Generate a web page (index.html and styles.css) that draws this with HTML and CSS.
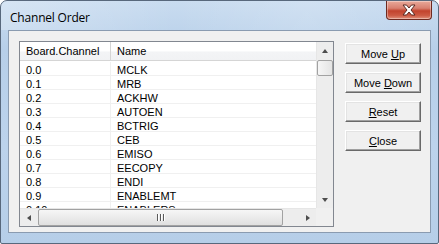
FILE: index.html
```html
<!DOCTYPE html>
<html>
<head>
<meta charset="utf-8">
<link rel="stylesheet" href="styles.css">
</head>
<body>
<div class="window">
  <div class="titlebar">
    <span class="title">Channel Order</span>
    <div class="close">
      <svg width="16" height="12" viewBox="0 0 16 12">
        <path d="M2 1 L5.5 1 L8 4 L10.5 1 L14 1 L10 6 L14 11 L10.5 11 L8 8 L5.5 11 L2 11 L6 6 Z" fill="#fff" stroke="#5a2a22" stroke-width="1" stroke-linejoin="round"/>
      </svg>
    </div>
  </div>
  <div class="client">
    <div class="listbox">
      <div class="listarea">
        <div class="header">
          <div class="hcol c1">Board.Channel</div>
          <div class="hcol c2">Name</div>
        </div>
        <div class="rows">
          <div class="row"><span class="cell c1">0.0</span><span class="cell c2">MCLK</span></div>
          <div class="row"><span class="cell c1">0.1</span><span class="cell c2">MRB</span></div>
          <div class="row"><span class="cell c1">0.2</span><span class="cell c2">ACKHW</span></div>
          <div class="row"><span class="cell c1">0.3</span><span class="cell c2">AUTOEN</span></div>
          <div class="row"><span class="cell c1">0.4</span><span class="cell c2">BCTRIG</span></div>
          <div class="row"><span class="cell c1">0.5</span><span class="cell c2">CEB</span></div>
          <div class="row"><span class="cell c1">0.6</span><span class="cell c2">EMISO</span></div>
          <div class="row"><span class="cell c1">0.7</span><span class="cell c2">EECOPY</span></div>
          <div class="row"><span class="cell c1">0.8</span><span class="cell c2">ENDI</span></div>
          <div class="row"><span class="cell c1">0.9</span><span class="cell c2">ENABLEMT</span></div>
          <div class="row"><span class="cell c1">0.10</span><span class="cell c2">ENABLERS</span></div>
          <div class="row"><span class="cell c1">0.11</span><span class="cell c2">ESD</span></div>
        </div>
      </div>
      <div class="vscroll">
        <div class="sbtn"><span class="arrow up"></span></div>
        <div class="vthumb"></div>
        <div class="vtrack"></div>
        <div class="sbtn"><span class="arrow down"></span></div>
      </div>
      <div class="hscroll">
        <div class="sbtn h"><span class="arrow left"></span></div>
        <div class="hthumb"><span class="grip"></span><span class="grip"></span><span class="grip"></span></div>
        <div class="htrack"></div>
        <div class="sbtn h"><span class="arrow right"></span></div>
      </div>
      <div class="corner"></div>
    </div>
    <div class="buttons">
      <div class="btn"><span>Move <u>U</u>p</span></div>
      <div class="btn"><span>Move <u>D</u>own</span></div>
      <div class="btn"><span><u>R</u>eset</span></div>
      <div class="btn"><span><u>C</u>lose</span></div>
    </div>
  </div>
</div>
</body>
</html>
```
FILE: styles.css
```css
html, body {
  margin: 0;
  padding: 0;
  background: #ffffff;
}
.window {
  width: 439px;
  height: 244px;
  box-sizing: border-box;
  border: 1px solid #58687c;
  border-radius: 7px 7px 2px 2px;
  background: linear-gradient(180deg, #c9dcf0 0%, #b7cfe9 20%, #bcd3ec 60%, #b6cee8 100%);
  display: flex;
  flex-direction: column;
  overflow: hidden;
}
.titlebar {
  height: 29px;
  display: flex;
  justify-content: space-between;
  align-items: flex-start;
  padding: 0 6px 0 9px;
  background: linear-gradient(90deg, rgba(255,255,255,0.25), rgba(255,255,255,0) 40%, rgba(255,255,255,0.15) 70%, rgba(255,255,255,0));
}
.title {
  font-family: "Open Sans", "Noto Sans", sans-serif;
  font-size: 12px;
  color: #000;
  margin-top: 8px;
  letter-spacing: -0.2px;
}
.close {
  width: 46px;
  height: 19px;
  box-sizing: border-box;
  border: 1px solid #6e2a20;
  border-top: none;
  border-radius: 0 0 4px 4px;
  background: linear-gradient(180deg, #e9a99a 0%, #d88070 40%, #c2432d 55%, #cc5a43 80%, #e0917c 100%);
  box-shadow: inset 0 0 0 1px rgba(255,255,255,0.35);
  display: flex;
  align-items: center;
  justify-content: center;
}
.client {
  margin: 0 7px;
  height: 203px;
  box-sizing: border-box;
  border: 1px solid #8a9bb0;
  background: #f0f0f0;
  display: flex;
  align-items: flex-start;
  padding: 10px 0 0 10px;
  gap: 11px;
}
.listbox {
  width: 315px;
  height: 186px;
  box-sizing: border-box;
  border: 1px solid #828790;
  background: #fff;
  display: grid;
  grid-template-columns: 296px 17px;
  grid-template-rows: 166px 18px;
  font-family: "Liberation Sans", Arial, sans-serif;
  font-size: 11px;
  color: #000;
}
.listarea {
  overflow: hidden;
}
.header {
  height: 19px;
  display: flex;
  background: linear-gradient(180deg, #ffffff 0%, #ffffff 50%, #f3f4f6 55%, #f1f2f4 100%);
  border-bottom: 1px solid #d5d5d5;
  box-sizing: border-box;
}
.hcol {
  box-sizing: border-box;
  line-height: 19px;
  padding-left: 6px;
  border-right: 1px solid #d5d5d5;
}
.hcol.c1 { width: 91px; }
.hcol.c2 { flex: 1; border-right: none; }
.rows {
  display: flex;
  flex-direction: column;
  padding-top: 1px;
}
.row {
  height: 13px;
  display: flex;
  border-bottom: 1px solid #f0f0f0;
}
.cell {
  line-height: 14px;
  padding-top: 1px;
  padding-left: 6px;
  box-sizing: border-box;
  white-space: nowrap;
}
.cell.c1 { width: 91px; border-right: 1px solid #f0f0f0; }
.cell.c2 { flex: 1; }
.vscroll {
  display: flex;
  flex-direction: column;
  background: #ededed;
  border-left: 1px solid #e6e6e6;
}
.sbtn {
  height: 17px;
  flex: none;
  display: flex;
  align-items: center;
  justify-content: center;
}
.sbtn.h {
  width: 17px;
  height: auto;
}
.vthumb {
  height: 16px;
  margin: 1px 0;
  box-sizing: border-box;
  border: 1px solid #a2a2a2;
  border-radius: 2px;
  background: linear-gradient(90deg, #f6f6f6, #e4e4e4);
}
.vtrack { flex: 1; }
.hscroll {
  display: flex;
  background: #ededed;
  border-top: 1px solid #e6e6e6;
}
.hthumb {
  width: 245px;
  margin: 0 1px;
  box-sizing: border-box;
  border: 1px solid #a2a2a2;
  border-radius: 2px;
  background: linear-gradient(180deg, #f6f6f6, #e0e0e0);
  display: flex;
  justify-content: center;
  align-items: center;
  gap: 1px;
}
.grip {
  width: 1px;
  height: 7px;
  background: #5a5a5a;
  box-shadow: 1px 0 0 #fff;
  margin-right: 1px;
}
.htrack { flex: 1; }
.corner { background: #f0f0f0; }
.arrow {
  width: 0;
  height: 0;
  border-style: solid;
}
.arrow.up { border-width: 0 3.5px 4px 3.5px; border-color: transparent transparent #4d4d4d transparent; }
.arrow.down { border-width: 4px 3.5px 0 3.5px; border-color: #4d4d4d transparent transparent transparent; }
.arrow.left { border-width: 3.5px 4px 3.5px 0; border-color: transparent #4d4d4d transparent transparent; }
.arrow.right { border-width: 3.5px 0 3.5px 4px; border-color: transparent transparent transparent #4d4d4d; }
.buttons {
  display: flex;
  flex-direction: column;
  gap: 8px;
  margin-top: 2px;
}
.btn {
  width: 76px;
  height: 21px;
  box-sizing: border-box;
  border: 1px solid;
  border-color: #ffffff #696969 #696969 #ffffff;
  box-shadow: inset -1px -1px 0 #a0a0a0, inset 1px 1px 0 #e3e3e3;
  background: #f0f0f0;
  font-family: "Liberation Sans", Arial, sans-serif;
  font-size: 11px;
  color: #000;
  display: flex;
  align-items: center;
  justify-content: center;
}
```
